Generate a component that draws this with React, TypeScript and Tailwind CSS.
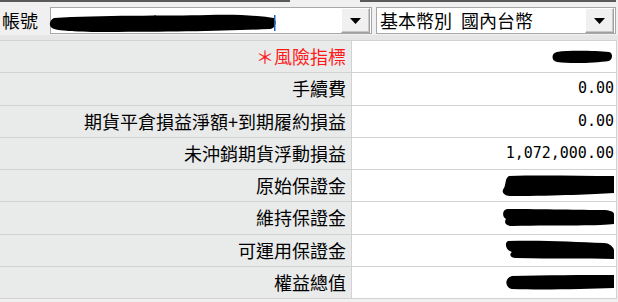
import React from "react";

const CJK = '"Noto Sans CJK TC", "Noto Sans CJK SC", sans-serif';

function DropButton() {
  return (
    <div className="flex h-[25px] w-[29px] items-center justify-center border border-t-[#ffffff] border-l-[#ffffff] border-b-[#a0a0a0] border-r-[#a0a0a0] bg-[#f0f0f0] shadow-[inset_-1px_-1px_0_#c8c8c8]">
      <svg width="11" height="6" viewBox="0 0 11 6">
        <polygon points="0,0 11,0 5.5,6" fill="#000" />
      </svg>
    </div>
  );
}

function Blob({ w, h, d }: { w: number; h: number; d: string }) {
  return (
    <svg width={w} height={h} viewBox={`0 0 ${w} ${h}`} className="block">
      <path d={d} fill="#000" />
    </svg>
  );
}

type Row = { label: string; red?: boolean; value?: string; blob?: React.ReactNode };

const rows: Row[] = [
  {
    label: "＊風險指標",
    red: true,
    blob: (
      <div className="mr-[1px]">
        <Blob w={62} h={14} d="M6 2 C20 0 45 1 58 2 C62 3 62 9 58 11 C44 13 20 14 6 12 C0 11 0 3 6 2 Z" />
      </div>
    ),
  },
  { label: "手續費", value: "0.00" },
  { label: "期貨平倉損益淨額+到期履約損益", value: "0.00" },
  { label: "未沖銷期貨浮動損益", value: "1,072,000.00" },
  {
    label: "原始保證金",
    blob: (
      <Blob w={113} h={22} d="M8 1 C40 0 80 1 113 1 L113 18 C90 19 60 21 10 21 C2 21 0 16 3 13 C5 9 4 3 8 1 Z" />
    ),
  },
  {
    label: "維持保證金",
    blob: (
      <Blob w={112} h={18} d="M5 0 C40 0 80 1 100 1 C108 1 112 3 112 5 L112 15 C100 17 60 16 10 17 C3 17 2 13 4 10 C0 8 0 1 5 0 Z" />
    ),
  },
  {
    label: "可運用保證金",
    blob: (
      <Blob w={110} h={20} d="M4 1 C40 0 70 2 100 3 C106 3 110 8 110 10 L110 19 C80 18 50 19 12 18 C6 18 5 14 8 12 C2 11 0 3 4 1 Z" />
    ),
  },
  {
    label: "權益總值",
    blob: (
      <Blob w={110} h={15} d="M8 1 C40 0 80 0 110 0 L110 13 C80 14 40 15 8 14 C1 13 0 3 8 1 Z" />
    ),
  },
];

export default function App() {
  return (
    <div
      className="relative h-[302px] w-[618px] overflow-hidden bg-[#f0f0f0] text-black"
      style={{ fontFamily: CJK }}
    >
      {/* top strip */}
      <div className="flex h-[2px]">
        <div className="w-[290px] bg-[#5a5a5a]" />
        <div className="w-[70px]" />
        <div className="w-[256px] bg-[#5a5a5a]" />
      </div>

      {/* header row */}
      <div className="flex h-[33px] items-start pt-[5px]">
        <div className="w-[50px] pl-[2px] text-[18px] leading-[27px]">帳號</div>
        <div className="relative flex h-[27px] w-[322px] items-center justify-end border border-[#a8a8a8] bg-white pr-[1px]">
          <div className="absolute left-[-3px] top-[4px]">
            <svg width="230" height="22" viewBox="0 0 230 22">
              <path
                d="M6 6 C50 3 120 4 160 3 C190 2 215 4 226 6 C229 10 228 16 222 17 C180 19 120 20 60 20 C30 20 8 19 4 16 C0 13 2 8 6 6 Z"
                fill="#000"
              />
              <rect x="226" y="3" width="1.5" height="16" fill="#2060c0" />
            </svg>
          </div>
          <DropButton />
        </div>
        <div className="ml-[4px] flex h-[27px] w-[240px] items-center justify-between border border-[#a8a8a8] bg-white pl-[3px] pr-[1px]">
          <span className="flex text-[18px] leading-[25px]">
            <span>基本幣別</span>
            <span className="w-[9px]" />
            <span>國內台幣</span>
          </span>
          <DropButton />
        </div>
      </div>

      <div className="h-[5px] bg-[#e6e6e6]" />

      {/* table */}
      <div className="w-[617px] border-t border-r border-[#d2d2d2] bg-white">
        {rows.map((r, i) => (
          <div
            key={i}
            className="flex h-[32.25px] border-b border-[#d2d2d2]"
          >
            <div
              className={`flex w-[352px] items-center justify-end border-r border-[#d2d2d2] bg-[#e9eaea] pr-[5px] text-[18px] ${
                r.red ? "text-[#ff1a1a]" : "text-black"
              }`}
            >
              {r.label}
            </div>
            <div className="flex flex-1 items-center justify-end pr-[2px]">
              {r.value ? (
                <span
                  className="text-[15px] leading-none text-black"
                  style={{ fontFamily: '"DejaVu Sans Mono", monospace' }}
                >
                  {r.value}
                </span>
              ) : (
                r.blob
              )}
            </div>
          </div>
        ))}
      </div>
    </div>
  );
}
